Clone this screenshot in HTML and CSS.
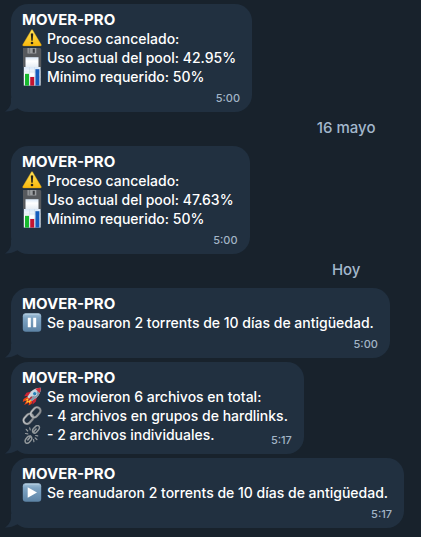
FILE: index.html
```html
<!DOCTYPE html>
<html lang="es">
<head>
<meta charset="utf-8">
<meta name="viewport" content="width=device-width, initial-scale=1">
<title>MOVER-PRO</title>
<link rel="stylesheet" href="styles.css">
</head>
<body>
<svg class="defs" aria-hidden="true">
  <defs>
    <linearGradient id="yellow" x1="0" y1="0" x2="0" y2="1"><stop offset="0" stop-color="#ffe45a"/><stop offset="1" stop-color="#f9b90c"/></linearGradient>
    <linearGradient id="blue" x1="0" y1="0" x2="0" y2="1"><stop offset="0" stop-color="#a5c3da"/><stop offset=".25" stop-color="#7fa5c4"/><stop offset="1" stop-color="#5c83a5"/></linearGradient>
    <linearGradient id="paper" x1="0" y1="0" x2="0" y2="1"><stop offset="0" stop-color="#d9e8f8"/><stop offset=".4" stop-color="#ffffff"/><stop offset="1" stop-color="#e6edf4"/></linearGradient>
    <linearGradient id="steel" x1="0" y1="0" x2="1" y2="1"><stop offset="0" stop-color="#c4c8cb"/><stop offset="1" stop-color="#85898d"/></linearGradient>
    <symbol id="warning" viewBox="0 0 19 19">
      <path d="M8.900.9q.6-1 1.200 0L18.700 15.600q.5 1.300-.9 1.300H1.200Q-.2 16.900.3 15.600z" fill="url(#yellow)" stroke="#d79c12" stroke-width=".4"/>
      <path d="M8.300 4.700q1.200-1.100 2.400 0l-.5 6.800q-.7.800-1.400 0z" fill="#262319"/>
      <circle cx="9.500" cy="14" r="1.300" fill="#262319"/>
    </symbol>
    <symbol id="floppy" viewBox="0 0 19 19">
      <path d="M.5-.5H17.300l1.400 1.400V19H.5z" fill="#56595d"/>
      <path d="M5 0h8.800v5.500H5z" fill="#9c9fa2"/>
      <path d="M6.200 0h1.500v5.500H6.200z" fill="#75787b"/>
      <path d="M10.200.8h2.100v4h-2.100z" fill="#3a3c3f"/>
      <path d="M3 9.200h13V19H3z" fill="url(#paper)"/>
    </symbol>
    <symbol id="chart" viewBox="0 0 19 19">
      <path d="M1.300 0h16.800v18.600H1.300z" fill="url(#paper)"/>
      <path d="M1.300 5h16.800M1.300 10h16.800M1.300 15h16.800M7 0v18.600M12 0v18.600" stroke="#cbd9e6" stroke-width=".5"/>
      <path d="M2.500 6.800h4v11.800h-4z" fill="#17b82e"/>
      <path d="M7.700 10h4v8.600h-4z" fill="#c41431"/>
      <path d="M12.900 2.200h4v16.400h-4z" fill="#165dbd"/>
    </symbol>
    <symbol id="pause" viewBox="0 0 19 19">
      <rect x=".3" y=".3" width="18.400" height="18.400" rx="3" fill="url(#blue)"/>
      <path d="M2.500 1.200h14" stroke="#c0d6e7" stroke-width=".7"/>
      <path d="M5.300 4.700h3v9.600h-3zM10.700 4.700h3v9.600h-3z" fill="#fff"/>
    </symbol>
    <symbol id="play" viewBox="0 0 19 19">
      <rect x=".3" y=".3" width="18.400" height="18.400" rx="3" fill="url(#blue)"/>
      <path d="M2.500 1.200h14" stroke="#c0d6e7" stroke-width=".7"/>
      <path d="M5.200 4.300v10.400l9.300-5.200z" fill="#fff"/>
    </symbol>
    <symbol id="rocket" viewBox="0 0 19 19">
      <path d="M5 9.500 1 12l-.8 3 4-2-2.500 5 5-2.500L6 18.500l3-1.500 1.500-4z" fill="#f04118"/>
      <path d="M5 11.500 2.500 13.500l2.500-.3-1.500 3 3-1.800.3 2L9 13z" fill="#ffd22e"/>
      <path d="M9 4.500 4 5.800 1.700 9.300l5-.3zM14.500 9.800l-1.200 5L10 17.500l0-5z" fill="#cb2436"/>
      <path d="M18.300.7Q12 .8 8.500 4.500L4.800 10l4.300 4.100 5.400-3.900Q18.300 6.500 18.300.7z" fill="#cbd4de"/>
      <path d="M18.300.7Q18.300 6.500 14.500 10.200l-5.400 3.900L7 12z" fill="#8998aa"/>
      <path d="M18.300.7q-3 0-5.400 1.200l4.200 4.200Q18.300 3.800 18.300.7z" fill="#d62d3d"/>
      <circle cx="12.200" cy="6.700" r="2.100" fill="#247eb7" stroke="#e8edf1" stroke-width=".7"/>
      <path d="m9.300 9.700-3.700 4" stroke="#b22334" stroke-width="1.400"/>
    </symbol>
    <symbol id="link" viewBox="0 0 19 19">
      <g fill="none" stroke="#555b61" stroke-width="2.700">
        <rect x="-5.500" y="-3.500" width="11" height="7" rx="3.500" transform="translate(5.900 12.800) rotate(-48)"/>
        <rect x="-5.500" y="-3.500" width="11" height="7" rx="3.500" transform="translate(13.100 6.300) rotate(-48)"/>
      </g>
      <g fill="none" stroke="url(#steel)" stroke-width="1.700">
        <rect x="-5.500" y="-3.500" width="11" height="7" rx="3.500" transform="translate(5.900 12.800) rotate(-48)"/>
        <rect x="-5.500" y="-3.500" width="11" height="7" rx="3.500" transform="translate(13.100 6.300) rotate(-48)"/>
      </g>
    </symbol>
    <symbol id="broken" viewBox="0 0 19 19">
      <g fill="none" stroke="#92989b" stroke-width="1.500" stroke-linecap="round">
        <path d="M10.600 7.500q-1.300-2 .4-3.900L13.600.9q2.400-1.300 3.300 1 .3 1.700-1 3.200l-2.200 2.400q-1.500 1.300-3.100 0l3-3.500"/>
        <path d="M8.300 11.200q-1.700-.8-3.200.6L3.200 14.200q-1.300 2 .1 3.600 1.700 1.100 3.500-.6l2-2.300q1.200-2-.5-3.700l-3 3.800"/>
        <path d="M3.700 4.300 5.200 6M7.200 2.800l.5 2.100M3 8.500l2.300.3M13.200 10.500l2 .3M12.700 13l1.700 1.500M11 14.500l.4 2.200" stroke-width="1.200"/>
      </g>
    </symbol>
    <symbol id="tail" viewBox="0 0 16 14">
      <path d="M6 0v5Q5 10 0 13.500 6 13.800 13 10V0z" fill="#213040"/>
    </symbol>
  </defs>
</svg>
<main class="chat">
  <article class="bubble">
    <svg class="tail" aria-hidden="true"><use href="#tail"/></svg>
    <h2 class="sender">MOVER-PRO</h2>
    <p class="line"><svg class="icon" aria-hidden="true"><use href="#warning"/></svg>Proceso cancelado:</p>
    <p class="line"><svg class="icon" aria-hidden="true"><use href="#floppy"/></svg>Uso actual del pool: 42.95%</p>
    <p class="line"><svg class="icon" aria-hidden="true"><use href="#chart"/></svg>Mínimo requerido: 50%</p>
    <time class="time">5:00</time>
  </article>
  <p class="date">16 mayo</p>
  <article class="bubble">
    <svg class="tail" aria-hidden="true"><use href="#tail"/></svg>
    <h2 class="sender">MOVER-PRO</h2>
    <p class="line"><svg class="icon" aria-hidden="true"><use href="#warning"/></svg>Proceso cancelado:</p>
    <p class="line"><svg class="icon" aria-hidden="true"><use href="#floppy"/></svg>Uso actual del pool: 47.63%</p>
    <p class="line"><svg class="icon" aria-hidden="true"><use href="#chart"/></svg>Mínimo requerido: 50%</p>
    <time class="time">5:00</time>
  </article>
  <p class="date">Hoy</p>
  <article class="bubble">
    <svg class="tail" aria-hidden="true"><use href="#tail"/></svg>
    <h2 class="sender">MOVER-PRO</h2>
    <p class="line"><svg class="icon" aria-hidden="true"><use href="#pause"/></svg>Se pausaron 2 torrents de 10 días de antigüedad.</p>
    <time class="time">5:00</time>
  </article>
  <article class="bubble">
    <svg class="tail" aria-hidden="true"><use href="#tail"/></svg>
    <h2 class="sender">MOVER-PRO</h2>
    <p class="line"><svg class="icon" aria-hidden="true"><use href="#rocket"/></svg>Se movieron 6 archivos en total:</p>
    <p class="line"><svg class="icon" aria-hidden="true"><use href="#link"/></svg>- 4 archivos en grupos de hardlinks.</p>
    <div class="last">
      <p class="line"><svg class="icon" aria-hidden="true"><use href="#broken"/></svg>- 2 archivos individuales.</p>
      <time class="time">5:17</time>
    </div>
  </article>
  <article class="bubble">
    <svg class="tail" aria-hidden="true"><use href="#tail"/></svg>
    <h2 class="sender">MOVER-PRO</h2>
    <p class="line"><svg class="icon" aria-hidden="true"><use href="#play"/></svg>Se reanudaron 2 torrents de 10 días de antigüedad.</p>
    <time class="time">5:17</time>
  </article>
</main>
</body>
</html>
```
FILE: styles.css
```css
* {
  box-sizing: border-box;
}

body {
  margin: 0;
  background: #18222c;
  color: #fff;
  font: 500 14px/19px Inter, "Liberation Sans", sans-serif;
}

.defs {
  position: absolute;
  width: 0;
  height: 0;
}

.chat {
  display: flex;
  flex-direction: column;
  align-items: flex-start;
  gap: 4px;
  padding: 4px 11px;
}

.bubble {
  position: relative;
  display: flex;
  flex-direction: column;
  padding: 6px 12px 6px 11px;
  border-radius: 17px;
  background: #213040;
}

.tail {
  position: absolute;
  left: -6px;
  bottom: 0;
  width: 16px;
  height: 14px;
}

.sender,
.line,
.date {
  margin: 0;
}

.sender {
  font-size: 15px;
  font-weight: 700;
  line-height: 19px;
}

.line {
  display: flex;
  gap: 5px;
  padding-right: 4px;
  white-space: nowrap;
}

.icon {
  flex: none;
  width: 20px;
  height: 19px;
}

.time {
  align-self: flex-end;
  padding-top: 4px;
  color: #a3b5c6;
  font-size: 11px;
  font-weight: 500;
  line-height: 16px;
}

.last {
  display: flex;
  justify-content: space-between;
  height: 23px;
}

.date {
  align-self: flex-end;
  width: 32%;
  padding: 2px 0 4px;
  color: #a3b8cc;
  font-size: 15px;
  font-weight: 500;
  line-height: 20px;
  text-align: center;
}
```
